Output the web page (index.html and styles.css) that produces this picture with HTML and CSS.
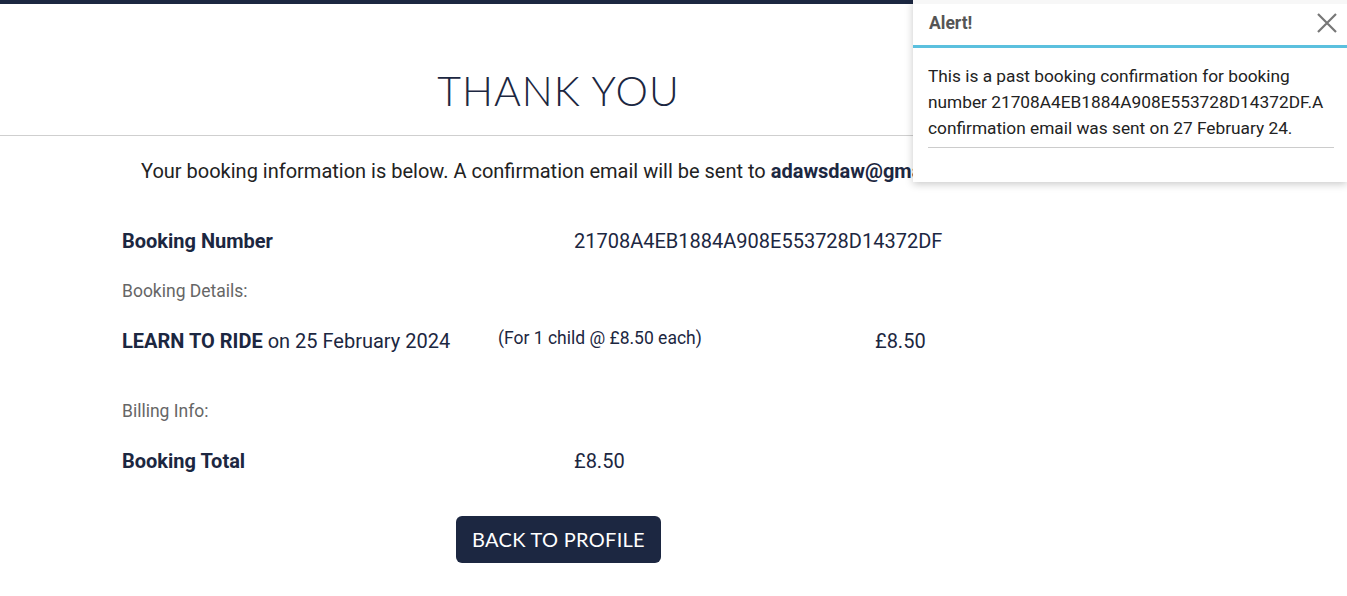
FILE: index.html
```html
<!DOCTYPE html>
<html lang="en">
<head>
<meta charset="utf-8">
<title>Thank You</title>
<link rel="stylesheet" href="styles.css">
</head>
<body>
<div class="topbar"></div>
<header class="page-header">
  <h1 class="title">THANK YOU</h1>
</header>
<main class="content">
  <p class="intro">Your booking information is below. A confirmation email will be sent to <strong>adawsdaw@gmail.com</strong>.</p>
  <div class="row row-two first">
    <div class="label">Booking Number</div>
    <div class="value">21708A4EB1884A908E553728D14372DF</div>
  </div>
  <div class="section-label">Booking Details:</div>
  <div class="row row-three">
    <div class="value"><strong>LEARN TO RIDE</strong> on 25 February 2024</div>
    <div class="note">(For 1 child @ £8.50 each)</div>
    <div class="value">£8.50</div>
  </div>
  <div class="section-label billing">Billing Info:</div>
  <div class="row row-two">
    <div class="label">Booking Total</div>
    <div class="value">£8.50</div>
  </div>
  <div class="actions">
    <a class="btn" href="#">BACK TO PROFILE</a>
  </div>
</main>
<div class="alert">
  <div class="alert-head">
    <span class="alert-title">Alert!</span>
    <svg class="alert-close" width="20" height="20" viewBox="0 0 20 20"><path d="M1 1 L19 19 M19 1 L1 19" stroke="#777" stroke-width="2.2" fill="none"/></svg>
  </div>
  <div class="alert-body">
    <p>This is a past booking confirmation for booking number 21708A4EB1884A908E553728D14372DF.A confirmation email was sent on 27 February 24.</p>
    <hr class="alert-rule">
  </div>
</div>
</body>
</html>
```
FILE: styles.css
```css
* { box-sizing: border-box; }
html, body { margin: 0; padding: 0; background: #fff; }
body {
  font-family: Roboto, "Liberation Sans", sans-serif;
  color: #1c2741;
  overflow: hidden;
}
.topbar { height: 4px; background: #1c2741; }
.page-header {
  height: 132px;
  border-bottom: 1px solid #cfcfcf;
  padding: 63px 230px 0 0;
  text-align: center;
}
.title {
  margin: 0;
  font-family: Lato, "Open Sans", sans-serif;
  font-weight: 300;
  font-size: 41px;
  line-height: 48px;
  letter-spacing: 1px;
  color: #1c2741;
}
.content { padding: 0 0 0 122px; }
.intro {
  margin: 0;
  padding: 22px 0 0 19px;
  font-size: 20px;
  line-height: 26px;
  color: #222;
  white-space: nowrap;
}
.intro strong { color: #1c2741; }
.row { display: grid; align-items: center; }
.row-two { grid-template-columns: 452px 1fr; height: 50px; }
.row-two.first { margin-top: 32px; }
.row-three { grid-template-columns: 376px 377px 1fr; height: 50px; }
.label { font-weight: 700; font-size: 20px; color: #1c2741; }
.value { font-size: 20px; color: #1c2741; }
.value strong { font-weight: 700; }
.note { font-size: 17.5px; color: #1c2741; margin-top: -6px; }
.section-label {
  font-size: 17.5px;
  color: #666;
  height: 50px;
  display: flex;
  align-items: center;
}
.section-label.billing { margin-top: 20px; }
.actions { padding: 30px 0 0 334px; }
.btn {
  display: inline-block;
  background: #1c2741;
  color: #fff;
  text-decoration: none;
  font-family: Lato, "Open Sans", sans-serif;
  font-weight: 400;
  font-size: 20px;
  letter-spacing: 0.3px;
  line-height: 47px;
  height: 47px;
  width: 205px;
  text-align: center;
  border-radius: 6px;
}
.alert {
  position: absolute;
  top: 0;
  left: 913px;
  width: 434px;
  background: #fff;
  border-top: 4px solid #f7f7f7;
  box-shadow: 0 2px 8px rgba(0,0,0,0.22);
}
.alert-head {
  height: 44px;
  display: flex;
  align-items: center;
  justify-content: space-between;
  padding: 0 10px 3px 16px;
  border-bottom: 3px solid #5bc0de;
}
.alert-title { font-weight: 700; font-size: 17.5px; color: #555; }
.alert-close { display: block; }
.alert-body { padding: 15px 13px 34px 15px; }
.alert-body p {
  margin: 0;
  font-size: 17.3px;
  line-height: 26px;
  color: #222;
}
.alert-rule {
  margin: 6px 0 0 0;
  border: 0;
  border-top: 1px solid #ccc;
}
```
